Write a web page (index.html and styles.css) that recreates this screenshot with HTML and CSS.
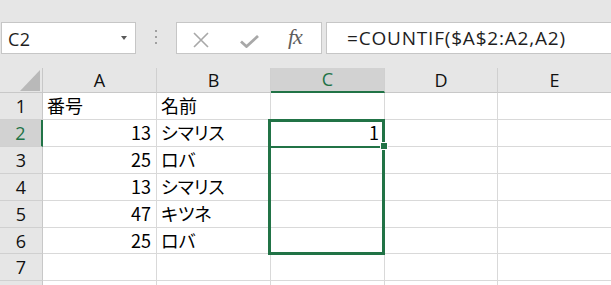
FILE: index.html
```html
<!DOCTYPE html>
<html lang="ja">
<head>
<meta charset="utf-8">
<link rel="stylesheet" href="styles.css">
</head>
<body>
<div class="app">
  <div class="fbar">
    <div class="namebox"><span class="nb-text">C2</span><span class="nb-arrow"></span></div>
    <div class="grip"><i></i><i></i><i></i></div>
    <div class="btns">
      <svg class="ic-x" width="16" height="16" viewBox="0 0 16 16"><path d="M1 1L15 15M15 1L1 15" stroke="#a8a8a8" stroke-width="1.6" fill="none"/></svg>
      <svg class="ic-ok" width="19" height="13" viewBox="0 0 19 13"><path d="M1 6.5L6.5 11.5L18 1" stroke="#a8a8a8" stroke-width="2.8" fill="none"/></svg>
      <span class="fx">fx</span>
    </div>
    <div class="formula">=COUNTIF($A$2:A2,A2)</div>
  </div>
  <div class="sheet">
    <div class="corner"><span class="tri"></span></div>
    <div class="ch">A</div>
    <div class="ch">B</div>
    <div class="ch ch-act">C</div>
    <div class="ch">D</div>
    <div class="ch ch-last">E</div>

    <div class="rh">1</div>
    <div class="c t">番号</div>
    <div class="c t">名前</div>
    <div class="c"></div>
    <div class="c"></div>
    <div class="c"></div>

    <div class="rh rh-act">2</div>
    <div class="c n">13</div>
    <div class="c t">シマリス</div>
    <div class="c n">1</div>
    <div class="c"></div>
    <div class="c"></div>

    <div class="rh">3</div>
    <div class="c n">25</div>
    <div class="c t">ロバ</div>
    <div class="c"></div>
    <div class="c"></div>
    <div class="c"></div>

    <div class="rh">4</div>
    <div class="c n">13</div>
    <div class="c t">シマリス</div>
    <div class="c"></div>
    <div class="c"></div>
    <div class="c"></div>

    <div class="rh">5</div>
    <div class="c n">47</div>
    <div class="c t">キツネ</div>
    <div class="c"></div>
    <div class="c"></div>
    <div class="c"></div>

    <div class="rh">6</div>
    <div class="c n">25</div>
    <div class="c t">ロバ</div>
    <div class="c"></div>
    <div class="c"></div>
    <div class="c"></div>

    <div class="rh">7</div>
    <div class="c"></div>
    <div class="c"></div>
    <div class="c"></div>
    <div class="c"></div>
    <div class="c"></div>

    <div class="rh"></div>
    <div class="c"></div>
    <div class="c"></div>
    <div class="c"></div>
    <div class="c"></div>
    <div class="c"></div>

    <div class="selection"></div>
    <div class="active-line"></div>
    <div class="handle"></div>
  </div>
</div>
</body>
</html>
```
FILE: styles.css
```css
html, body {
  margin: 0;
  padding: 0;
  background: #e6e6e6;
  overflow: hidden;
}
.app {
  width: 611px;
  height: 285px;
  overflow: hidden;
  background: #e6e6e6;
}
.fbar {
  height: 68px;
  box-sizing: border-box;
  padding-top: 22px;
  display: flex;
  align-items: flex-start;
}
.namebox {
  margin-left: 1px;
  width: 135px;
  height: 32px;
  box-sizing: border-box;
  background: #fff;
  border: 1px solid #c6c6c6;
  display: flex;
  align-items: center;
  position: relative;
}
.nb-text {
  font-family: "Open Sans", "Noto Sans", sans-serif;
  font-size: 18px;
  letter-spacing: 0.5px;
  color: #1e1e1e;
  margin-left: 6px;
  margin-top: 1px;
}
.nb-arrow {
  position: absolute;
  left: 119px;
  top: 13px;
  width: 0;
  height: 0;
  border-left: 3px solid transparent;
  border-right: 3px solid transparent;
  border-top: 4px solid #5a5a5a;
}
.grip {
  width: 40px;
  display: flex;
  flex-direction: column;
  align-items: center;
  gap: 4px;
  padding-top: 8px;
}
.grip i {
  display: block;
  width: 2px;
  height: 2px;
  background: #a0a0a0;
}
.btns {
  width: 146px;
  height: 32px;
  box-sizing: border-box;
  background: #fff;
  border: 1px solid #c6c6c6;
  position: relative;
}
.ic-x {
  position: absolute;
  left: 16px;
  top: 9px;
}
.ic-ok {
  position: absolute;
  left: 63px;
  top: 12px;
}
.fx {
  position: absolute;
  left: 111px;
  top: 1px;
  font-family: "Liberation Serif", serif;
  font-style: italic;
  font-size: 22px;
  color: #5e5e5e;
  letter-spacing: -1px;
}
.formula {
  margin-left: 4px;
  flex: 1;
  height: 32px;
  box-sizing: border-box;
  background: #fff;
  border: 1px solid #c6c6c6;
  border-right: none;
  padding-left: 20px;
  font-family: "Open Sans", "Noto Sans", sans-serif;
  font-size: 19px;
  letter-spacing: 0.8px;
  line-height: 30px;
  color: #1e1e1e;
  white-space: nowrap;
}
.sheet {
  position: relative;
  display: grid;
  grid-template-columns: 43px 114px 114px 114px 113px 114px;
  grid-template-rows: 25px 27px 27px 27px 27px 27px 26px 27px 27px;
  background: #fff;
}
.corner {
  background: #e6e6e6;
  border-right: 1px solid #c8c8c8;
  border-bottom: 1px solid #c8c8c8;
  position: relative;
}
.tri {
  position: absolute;
  right: 2px;
  bottom: 1px;
  width: 0;
  height: 0;
  border-left: 20px solid transparent;
  border-bottom: 21px solid #b9b9b9;
}
.ch {
  background: #e6e6e6;
  border-right: 1px solid #d0d0d0;
  border-bottom: 1px solid #c8c8c8;
  text-align: center;
  font-family: "Open Sans", "Noto Sans", sans-serif;
  font-size: 18px;
  line-height: 24px;
  color: #111;
}
.ch-act {
  background: #d2d2d2;
  color: #217346;
  border-bottom: 2px solid #217346;
  line-height: 23px;
}
.rh {
  background: #e6e6e6;
  border-right: 1px solid #c8c8c8;
  border-bottom: 1px solid #d0d0d0;
  text-align: center;
  font-family: "Open Sans", "Noto Sans", sans-serif;
  font-size: 18px;
  line-height: 26px;
  color: #111;
}
.rh-act {
  background: #d2d2d2;
  color: #217346;
  border-right: 2px solid #217346;
}
.c {
  border-right: 1px solid #d9d9d9;
  border-bottom: 1px solid #d9d9d9;
  font-family: "Noto Sans CJK JP", sans-serif;
  font-size: 18px;
  line-height: 25px;
  color: #000;
  white-space: nowrap;
  overflow: hidden;
}
.n {
  text-align: right;
  padding-right: 5px;
}
.t {
  padding-left: 4px;
  font-feature-settings: "palt";
}
.selection {
  position: absolute;
  left: 268px;
  top: 51px;
  width: 117px;
  height: 136px;
  box-sizing: border-box;
  border: 3px solid #217346;
}
.active-line {
  position: absolute;
  left: 268px;
  top: 78px;
  width: 117px;
  height: 2px;
  background: #217346;
}
.handle {
  position: absolute;
  left: 381px;
  top: 75px;
  width: 6px;
  height: 6px;
  box-sizing: border-box;
  background: #217346;
  outline: 1px solid #fff;
}
```
